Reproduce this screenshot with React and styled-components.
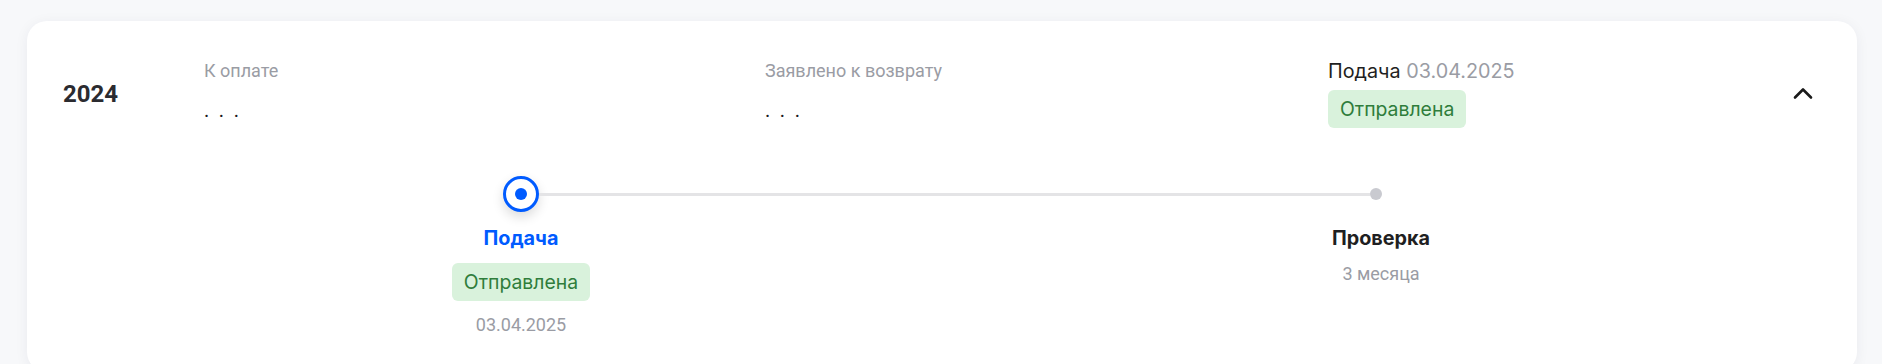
import React from "react";
import styled, { createGlobalStyle } from "styled-components";

const GlobalStyle = createGlobalStyle`
  html, body { margin: 0; padding: 0; background: #f7f8fa; }
  body { font-family: Roboto, "Noto Sans", sans-serif; color: #1f1f22; }
`;

const Page = styled.div`
  padding: 21px 25px 0 27px;
`;

const Card = styled.section`
  background: #ffffff;
  border-radius: 20px;
  box-shadow: 0 2px 14px rgba(20, 30, 60, 0.06);
  padding: 38px 42px 36px 36px;
`;

const Header = styled.div`
  display: grid;
  grid-template-columns: 141px 561px 563px 1fr 24px;
  align-items: center;
`;

const Year = styled.div`
  font-size: 24px;
  font-weight: 700;
  line-height: 28px;
  color: #2b2b30;
`;

const Field = styled.div`
  display: flex;
  flex-direction: column;
  align-self: start;
`;

const Label = styled.div`
  font-size: 18px;
  line-height: 24px;
  color: #9a9ca4;
`;

const Value = styled.div`
  margin-top: 15px;
  font-size: 20px;
  line-height: 24px;
  letter-spacing: 9.6px;
  color: #1a1a1d;
`;

const Status = styled.div`
  display: flex;
  flex-direction: column;
  align-items: flex-start;
  gap: 7px;
`;

const StatusTitle = styled.div`
  font-family: Inter, Roboto, sans-serif;
  font-size: 19.8px;
  line-height: 24px;
  color: #1f1f22;
`;

const Muted = styled.span`
  color: #9a9ca4;
`;

const Badge = styled.span`
  display: inline-flex;
  align-items: center;
  height: 38px;
  padding: 0 12px;
  border-radius: 6px;
  background: #d9f2dc;
  color: #2f7d3b;
  font-family: Inter, Roboto, sans-serif;
  font-size: 19.4px;
  box-sizing: border-box;
`;

const Toggle = styled.button`
  width: 24px;
  height: 24px;
  padding: 0;
  border: none;
  background: none;
  display: flex;
  align-items: center;
  justify-content: center;
  cursor: pointer;
  color: #1a1a1a;
`;

const Timeline = styled.div`
  margin-top: 48px;
`;

const Track = styled.div`
  display: flex;
  align-items: center;
  width: 879px;
  margin-left: 440px;
`;

const ActiveDot = styled.span`
  width: 36px;
  height: 36px;
  box-sizing: border-box;
  border: 3px solid #005bff;
  border-radius: 50%;
  background: #fff;
  display: flex;
  align-items: center;
  justify-content: center;
  box-shadow: 0 5px 12px rgba(0, 0, 0, 0.14);
  flex-shrink: 0;
  &::after {
    content: "";
    width: 12px;
    height: 12px;
    border-radius: 50%;
    background: #005bff;
  }
`;

const Line = styled.span`
  flex: 1;
  height: 3px;
  background: #e4e4e6;
`;

const EndDot = styled.span`
  width: 12px;
  height: 12px;
  border-radius: 50%;
  background: #c9cad0;
  flex-shrink: 0;
`;

const Steps = styled.div`
  display: flex;
  gap: 660px;
  margin-left: 358px;
  margin-top: 14px;
`;

const Step = styled.div`
  width: 200px;
  display: flex;
  flex-direction: column;
  align-items: center;
  gap: 13px;
`;

const StepTitle = styled.div`
  font-family: Inter, Roboto, sans-serif;
  font-size: 19.8px;
  line-height: 24px;
  font-weight: 700;
  color: ${(p) => (p.$active ? "#005bff" : "#1f1f22")};
`;

const StepNote = styled.div`
  font-size: 18px;
  line-height: 22px;
  color: #9a9ca4;
`;

function ChevronUp() {
  return (
    <svg width="24" height="24" viewBox="0 0 24 24" fill="none">
      <polyline
        points="4 15.5 12 7.5 20 15.5"
        stroke="currentColor"
        strokeWidth="2.6"
        strokeLinecap="round"
        strokeLinejoin="round"
      />
    </svg>
  );
}

export default function App() {
  return (
    <>
      <GlobalStyle />
      <Page>
        <Card>
          <Header>
            <Year>2024</Year>
            <Field>
              <Label>К оплате</Label>
              <Value>...</Value>
            </Field>
            <Field>
              <Label>Заявлено к возврату</Label>
              <Value>...</Value>
            </Field>
            <Status>
              <StatusTitle>
                Подача <Muted>03.04.2025</Muted>
              </StatusTitle>
              <Badge>Отправлена</Badge>
            </Status>
            <Toggle aria-label="Свернуть">
              <ChevronUp />
            </Toggle>
          </Header>
          <Timeline>
            <Track>
              <ActiveDot />
              <Line />
              <EndDot />
            </Track>
            <Steps>
              <Step>
                <StepTitle $active>Подача</StepTitle>
                <Badge>Отправлена</Badge>
                <StepNote>03.04.2025</StepNote>
              </Step>
              <Step>
                <StepTitle>Проверка</StepTitle>
                <StepNote>3 месяца</StepNote>
              </Step>
            </Steps>
          </Timeline>
        </Card>
      </Page>
    </>
  );
}
